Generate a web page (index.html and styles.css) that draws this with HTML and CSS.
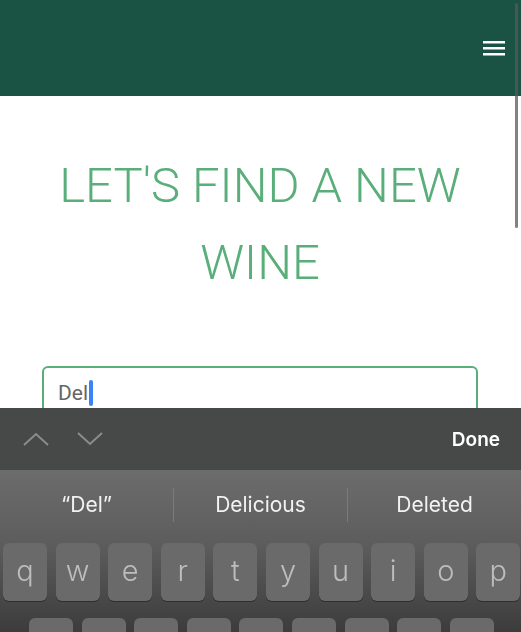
FILE: index.html
```html
<!DOCTYPE html>
<html lang="en">
<head>
    <meta charset="UTF-8">
    <meta name="viewport" content="width=device-width, initial-scale=1.0">
    <title>Find a Wine</title>
    <link rel="stylesheet" href="styles.css">
</head>
<body>
    <header class="topbar">
        <button class="menu-btn" aria-label="Menu">
            <svg width="22" height="16" viewBox="0 0 22 16">
                <rect x="0" y="0" width="22" height="2.5" fill="#fff"/>
                <rect x="0" y="6" width="22" height="2.5" fill="#fff"/>
                <rect x="0" y="12" width="22" height="2.5" fill="#fff"/>
            </svg>
        </button>
    </header>

    <main class="content">
        <h1 class="title">LET'S FIND A NEW WINE</h1>
        <div class="search-box">
            <span class="search-text">Del</span><span class="caret"></span>
        </div>
    </main>

    <div class="scroll-indicator"></div>

    <div class="keyboard">
        <div class="accessory">
            <div class="arrows">
                <svg width="26" height="16" viewBox="0 0 26 16"><path d="M1 14 L13 3 L25 14" fill="none" stroke="#8c8c8c" stroke-width="2"/></svg>
                <svg width="26" height="16" viewBox="0 0 26 16"><path d="M1 2 L13 13 L25 2" fill="none" stroke="#8c8c8c" stroke-width="2"/></svg>
            </div>
            <span class="done">Done</span>
        </div>
        <div class="keys-area">
            <div class="suggestions">
                <span class="suggestion">&ldquo;Del&rdquo;</span>
                <span class="suggestion">Delicious</span>
                <span class="suggestion">Deleted</span>
            </div>
            <div class="key-row">
                <span class="key">q</span><span class="key">w</span><span class="key">e</span><span class="key">r</span><span class="key">t</span><span class="key">y</span><span class="key">u</span><span class="key">i</span><span class="key">o</span><span class="key">p</span>
            </div>
            <div class="key-row row-two">
                <span class="key">a</span><span class="key">s</span><span class="key">d</span><span class="key">f</span><span class="key">g</span><span class="key">h</span><span class="key">j</span><span class="key">k</span><span class="key">l</span>
            </div>
        </div>
    </div>
</body>
</html>
```

FILE: styles.css
```css
body {
    margin: 0;
    font-family: Roboto, "Liberation Sans", sans-serif;
    background: #fff;
    overflow: hidden;
}
.topbar {
    height: 96px;
    background: #1a5244;
    display: flex;
    justify-content: flex-end;
    align-items: center;
    padding-right: 16px;
}
.menu-btn {
    background: none;
    border: none;
    padding: 0;
    margin-top: 1px;
    display: flex;
}
.content {
    padding: 51px 43px 0 42px;
}
.title {
    margin: 0 auto;
    font-family: Roboto, sans-serif;
    font-weight: 300;
    font-size: 49px;
    line-height: 77px;
    color: #5aae7a;
    text-align: center;
}
.search-box {
    margin-top: 65px;
    height: 50px;
    border: 2px solid #5aae7a;
    border-radius: 6px;
    display: flex;
    align-items: center;
    padding-left: 14px;
}
.search-text {
    font-size: 21px;
    color: #666;
}
.caret {
    width: 4px;
    height: 26px;
    margin-left: 1px;
    background: #3b82f6;
    border-radius: 2px;
}
.scroll-indicator {
    position: absolute;
    top: 3px;
    right: 3px;
    width: 3px;
    height: 225px;
    border-radius: 2px;
    background: rgba(90, 90, 90, 0.75);
}
.keyboard {
    position: fixed;
    left: 0;
    right: 0;
    top: 408px;
    bottom: 0;
    font-family: Inter, "Liberation Sans", sans-serif;
}
.accessory {
    height: 62px;
    background: #474848;
    display: flex;
    align-items: center;
    justify-content: space-between;
    padding: 0 21px 0 23px;
}
.arrows {
    display: flex;
    gap: 28px;
}
.done {
    color: #fff;
    font-weight: 600;
    font-size: 19px;
}
.keys-area {
    height: 162px;
    background: linear-gradient(#6b6c6b, #5c5d5c 45%, #3c3c3c);
}
.suggestions {
    height: 69px;
    display: flex;
    align-items: center;
}
.suggestion {
    flex: 1;
    text-align: center;
    color: #f2f2f2;
    font-size: 21px;
    line-height: 34px;
}
.suggestion + .suggestion {
    border-left: 1px solid #7a7b7a;
}
.key-row {
    display: flex;
    gap: 8.6px;
    padding: 4px 2px 0 3px;
}
.row-two {
    padding: 17px 28px 0 29px;
}
.key {
    width: 44px;
    height: 58px;
    flex: none;
    border-radius: 6px;
    background: #6a6a6a;
    box-shadow: 0 1px 0 #2e2e2e;
    color: #bdbdbd;
    font-size: 29px;
    font-weight: 300;
    display: flex;
    justify-content: center;
    align-items: center;
    padding-bottom: 4px;
    box-sizing: border-box;
}
```
